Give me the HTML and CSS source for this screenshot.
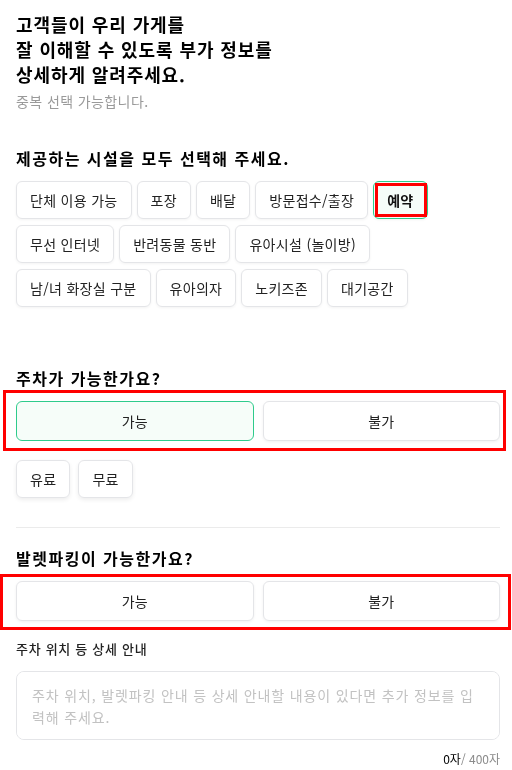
FILE: index.html
```html
<!DOCTYPE html>
<html lang="ko">
<head>
<meta charset="utf-8">
<link rel="stylesheet" href="styles.css">
</head>
<body>
<main class="page">
  <h1 class="title">고객들이 우리 가게를<br>잘 이해할 수 있도록 부가 정보를<br>상세하게 알려주세요.</h1>
  <p class="sub">중복 선택 가능합니다.</p>

  <h2 class="heading facilities-heading">제공하는 시설을 모두 선택해 주세요.</h2>
  <div class="chips">
    <button class="chip">단체 이용 가능</button>
    <button class="chip">포장</button>
    <button class="chip">배달</button>
    <button class="chip">방문접수/출장</button>
    <button class="chip chip-on">예약<span class="mark mark-chip"></span></button>
    <button class="chip">무선 인터넷</button>
    <button class="chip">반려동물 동반</button>
    <button class="chip">유아시설 (놀이방)</button>
    <button class="chip">남/녀 화장실 구분</button>
    <button class="chip">유아의자</button>
    <button class="chip">노키즈존</button>
    <button class="chip">대기공간</button>
  </div>

  <h2 class="heading parking-heading">주차가 가능한가요?</h2>
  <div class="pair">
    <button class="opt opt-on">가능</button>
    <button class="opt">불가</button>
    <span class="mark mark-parking"></span>
  </div>
  <div class="fees">
    <button class="chip">유료</button>
    <button class="chip">무료</button>
  </div>

  <hr class="divider">

  <h2 class="heading valet-heading">발렛파킹이 가능한가요?</h2>
  <div class="pair">
    <button class="opt">가능</button>
    <button class="opt">불가</button>
    <span class="mark mark-valet"></span>
  </div>

  <label class="label" for="detail">주차 위치 등 상세 안내</label>
  <textarea id="detail" class="detail" placeholder="주차 위치, 발렛파킹 안내 등 상세 안내할 내용이 있다면 추가 정보를 입력해 주세요."></textarea>
  <p class="count"><span class="count-now">0자</span>/ 400자</p>
</main>
</body>
</html>
```

FILE: styles.css
```css
* { box-sizing: border-box; }
html, body { margin: 0; padding: 0; background: #fff; }
body {
  font-family: "Noto Sans CJK KR", "Noto Sans", sans-serif;
  color: #111;
}
.page {
  padding: 12px 12px 0 16px;
  width: 512px;
}
.title {
  margin: 0;
  font-size: 18px;
  line-height: 25px;
  font-weight: 700;
  letter-spacing: 0.9px;
  color: #000;
}
.sub {
  margin: 4px 0 0;
  font-size: 14px;
  line-height: 20px;
  letter-spacing: 0.4px;
  color: #9a9a9a;
}
.heading {
  margin: 0;
  font-size: 16px;
  line-height: 22px;
  font-weight: 700;
  letter-spacing: 1.5px;
  color: #000;
}
.facilities-heading { margin-top: 36px; }
.parking-heading { margin-top: 60px; }
.valet-heading { margin-top: 19px; }

.chips {
  margin-top: 12px;
  display: flex;
  flex-wrap: wrap;
  column-gap: 5px;
  row-gap: 6px;
  width: 440px;
}
.chip {
  position: relative;
  height: 38px;
  padding: 0 13px;
  border: 1px solid #e4e5e8;
  border-radius: 6px;
  background: #fff;
  font-family: inherit;
  font-size: 14px;
  letter-spacing: 0.3px;
  color: #222;
  box-shadow: 0 1px 3px rgba(0,0,0,0.05);
  cursor: pointer;
}
.chip-on {
  border-color: #2fcb8c;
  background: #f5fdf9;
  font-weight: 700;
  color: #111;
}
.pair {
  position: relative;
  margin-top: 12px;
  display: flex;
  gap: 9px;
}
.opt {
  flex: 1;
  height: 40px;
  border: 1px solid #e4e5e8;
  border-radius: 6px;
  background: #fff;
  font-family: inherit;
  font-size: 14px;
  color: #222;
  box-shadow: 0 1px 3px rgba(0,0,0,0.06);
}
.opt-on {
  border-color: #2fcb8c;
  background: #f6fdf9;
  box-shadow: none;
}
.fees {
  margin-top: 19px;
  display: flex;
  gap: 8px;
}
.fees .chip { padding: 0 13px; box-shadow: 0 2px 4px rgba(0,0,0,0.07); }

.mark {
  position: absolute;
  border: 3px solid #ff0000;
  pointer-events: none;
}
.mark-chip { top: 1px; left: 1px; right: 0; bottom: 1px; }
.mark-parking { top: -11px; left: -13px; right: -6px; bottom: -10px; }
.mark-valet { top: -7px; left: -16px; right: -11px; bottom: -9px; }

.divider {
  margin: 29px 0 0;
  border: 0;
  border-top: 1px solid #ebebeb;
}
.label {
  display: block;
  margin-top: 19px;
  font-size: 13px;
  line-height: 18px;
  font-weight: 500;
  letter-spacing: 0.7px;
  color: #222;
}
.detail {
  display: block;
  margin-top: 13px;
  width: 100%;
  height: 69px;
  padding: 12px 15px;
  border: 1px solid #e4e5e8;
  border-radius: 8px;
  font-family: inherit;
  font-size: 14px;
  line-height: 22px;
  letter-spacing: 0.85px;
  resize: none;
  color: #222;
}
.detail::placeholder { color: #c2c2c2; }
.count {
  margin: 11px 0 0;
  text-align: right;
  font-size: 12px;
  line-height: 16px;
  color: #8a8a8a;
}
.count-now { color: #000; }
```
